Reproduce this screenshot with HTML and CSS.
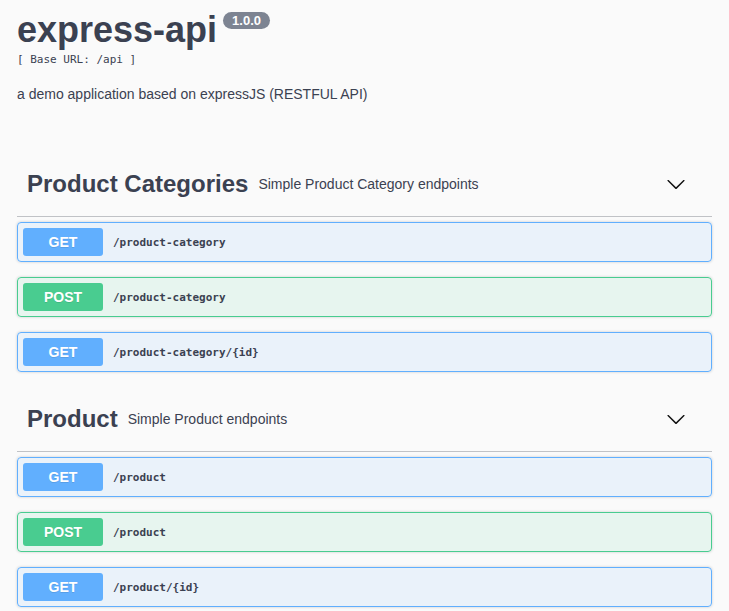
FILE: index.html
```html
<!DOCTYPE html>
<html lang="en">
<head>
<meta charset="utf-8">
<title>express-api</title>
<link rel="stylesheet" href="styles.css">
</head>
<body>
<div class="wrapper">
  <div class="info">
    <h2 class="title">express-api <span class="version">1.0.0</span></h2>
    <div class="base-url">[ Base URL: /api ]</div>
    <p class="description">a demo application based on expressJS (RESTFUL API)</p>
  </div>

  <section class="tag-section">
    <h3 class="tag">
      <span class="tag-name">Product Categories</span>
      <small class="tag-desc">Simple Product Category endpoints</small>
      <svg class="arrow" width="20" height="20" viewBox="0 0 20 20"><path d="M17.418 6.109c.272-.268.709-.268.979 0s.271.701 0 .969l-7.908 7.83c-.27.268-.707.268-.979 0l-7.908-7.83c-.27-.268-.27-.701 0-.969.271-.268.709-.268.979 0L10 13.25l7.418-7.141z"/></svg>
    </h3>
    <div class="opblock get"><span class="method">GET</span><span class="path">/product-category</span></div>
    <div class="opblock post"><span class="method">POST</span><span class="path">/product-category</span></div>
    <div class="opblock get"><span class="method">GET</span><span class="path">/product-category/{id}</span></div>
  </section>

  <section class="tag-section">
    <h3 class="tag">
      <span class="tag-name">Product</span>
      <small class="tag-desc">Simple Product endpoints</small>
      <svg class="arrow" width="20" height="20" viewBox="0 0 20 20"><path d="M17.418 6.109c.272-.268.709-.268.979 0s.271.701 0 .969l-7.908 7.83c-.27.268-.707.268-.979 0l-7.908-7.83c-.27-.268-.27-.701 0-.969.271-.268.709-.268.979 0L10 13.25l7.418-7.141z"/></svg>
    </h3>
    <div class="opblock get"><span class="method">GET</span><span class="path">/product</span></div>
    <div class="opblock post"><span class="method">POST</span><span class="path">/product</span></div>
    <div class="opblock get"><span class="method">GET</span><span class="path">/product/{id}</span></div>
  </section>
</div>
</body>
</html>
```
FILE: styles.css
```css
html, body {
  margin: 0;
  padding: 0;
  background: #fafafa;
}
body {
  font-family: "Liberation Sans", Arial, sans-serif;
  color: #3b4151;
}
.wrapper {
  padding: 0 17px;
}
.info {
  padding-top: 9px;
  margin-bottom: 48px;
}
.title {
  margin: 0;
  font-size: 36px;
  line-height: 41px;
  font-weight: 700;
  display: flex;
  align-items: flex-start;
}
.version {
  display: inline-block;
  margin: 3px 0 0 6px;
  padding: 2px 9px;
  font-size: 13px;
  line-height: 13px;
  font-weight: 700;
  color: #fff;
  background: #7d8492;
  border-radius: 57px;
}
.base-url {
  margin-top: 2px;
  font-family: "DejaVu Sans Mono", monospace;
  font-size: 11px;
  line-height: 16px;
  font-weight: 300;
}
.description {
  margin: 16px 0 0;
  font-size: 14px;
  line-height: 20px;
}
.tag-section {
  margin: 0;
}
.tag {
  margin: 0 0 5px;
  height: 64px;
  display: flex;
  align-items: center;
  padding: 0 26px 0 10px;
  border-bottom: 1px solid rgba(59, 65, 81, 0.3);
  font-size: 24px;
  font-weight: 700;
}
.tag-desc {
  flex: 1;
  padding: 0 10px;
  font-size: 14px;
  font-weight: 400;
}
.arrow {
  fill: #111;
}
.opblock {
  display: flex;
  align-items: center;
  padding: 5px;
  margin: 0 0 15px;
  border: 1px solid;
  border-radius: 4px;
  box-shadow: 0 0 3px rgba(0, 0, 0, 0.19);
}
.method {
  min-width: 80px;
  box-sizing: border-box;
  padding: 6px 0;
  text-align: center;
  font-size: 14px;
  line-height: 16px;
  font-weight: 700;
  color: #fff;
  border-radius: 3px;
  text-shadow: 0 1px 0 rgba(0, 0, 0, 0.1);
}
.path {
  padding: 0 10px;
  font-family: "DejaVu Sans Mono", monospace;
  font-size: 11px;
  font-weight: 600;
  color: #3b4151;
}
.get {
  background: rgba(97, 175, 254, 0.1);
  border-color: #61affe;
}
.get .method {
  background: #61affe;
}
.post {
  background: rgba(73, 204, 144, 0.1);
  border-color: #49cc90;
}
.post .method {
  background: #49cc90;
}
```
